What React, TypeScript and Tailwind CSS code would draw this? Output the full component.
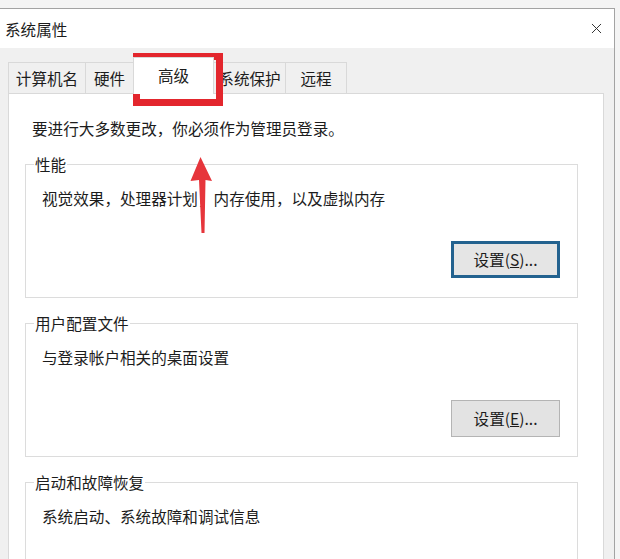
import { X } from "lucide-react";

const tabs = [
  { label: "计算机名", w: "w-[78px]" },
  { label: "硬件", w: "w-[49px]" },
  { label: "高级", w: "w-[81px]", active: true },
  { label: "系统保护", w: "w-[73px]" },
  { label: "远程", w: "w-[62px]" },
];

function SettingsButton({ hotkey, focused }: { hotkey: string; focused?: boolean }) {
  return (
    <button
      className={
        focused
          ? "ml-auto mr-[9px] flex h-[37px] w-[109px] items-center justify-center border-[3px] border-[#23628f] bg-[#e5e5e5] text-[15.6px] text-[#1c1c1c]"
          : "ml-auto mr-[9px] flex h-[37px] w-[109px] items-center justify-center border border-[#b4b4b4] bg-[#e3e3e3] text-[15.6px] text-[#1c1c1c]"
      }
    >
      设置(<span className="underline">{hotkey}</span>)...
    </button>
  );
}

function Group({
  title,
  text,
  hotkey,
  focused,
  className,
}: {
  title: string;
  text: string;
  hotkey: string;
  focused?: boolean;
  className: string;
}) {
  return (
    <fieldset className={`h-[144px] border border-[#dcdcdc] px-[8px] ${className}`}>
      <legend className="px-[1px] leading-[20px]">{title}</legend>
      <p className="mt-[14px] pl-[8px] leading-[20px]">{text}</p>
      <div className="mt-[33px] flex">
        <SettingsButton hotkey={hotkey} focused={focused} />
      </div>
    </fieldset>
  );
}

export default function App() {
  return (
    <div className="relative h-[559px] w-[620px] overflow-hidden bg-[#f4f4f4] pt-[8px] font-['Noto_Sans_CJK_SC','Liberation_Sans',sans-serif] text-[15.6px] text-[#1c1c1c]">
      <div className="flex h-full w-[615px] flex-col border-t border-r border-[#a3a3a3] bg-[#f0f0f0]">
        <div className="flex h-[39px] shrink-0 items-center justify-between bg-white pl-[5px]">
          <span className="leading-[20px]">系统属性</span>
          <div className="flex h-full w-[36px] items-center justify-center text-[#333]">
            <X size={17} strokeWidth={1.4} />
          </div>
        </div>

        <div className="flex flex-1 flex-col pl-[8px] pr-[10px] pt-[9px]">
          <div className="flex h-[36px] items-end">
            {tabs.map((t) =>
              t.active ? (
                <div
                  key={t.label}
                  className={`relative z-10 -mb-px -ml-px flex h-[37px] items-center justify-center border border-b-0 border-[#d9d9d9] bg-white pb-[3px] leading-[20px] ${t.w}`}
                >
                  {t.label}
                </div>
              ) : (
                <div
                  key={t.label}
                  className={`-ml-px flex h-[31px] items-center justify-center border border-b-0 border-[#d9d9d9] bg-[#f0f0f0] leading-[20px] first:ml-0 ${t.w}`}
                >
                  {t.label}
                </div>
              )
            )}
          </div>

          <div className="flex-1 border border-[#d9d9d9] bg-white pl-[16px] pr-[25px] pt-[24px]">
            <p className="pl-[7px] leading-[20px]">要进行大多数更改，你必须作为管理员登录。</p>
            <Group
              className="mt-[16px]"
              title="性能"
              text="视觉效果，处理器计划，内存使用，以及虚拟内存"
              hotkey="S"
              focused
            />
            <Group className="mt-[15px]" title="用户配置文件" text="与登录帐户相关的桌面设置" hotkey="E" />
            <Group className="mt-[15px]" title="启动和故障恢复" text="系统启动、系统故障和调试信息" hotkey="T" />
          </div>
        </div>
      </div>

      <div className="absolute left-[133px] top-[53px] h-[53px] w-[90px] border-[7px] border-[#e3262d]" />

      <svg className="absolute left-[186px] top-[154px]" width="32" height="84" viewBox="0 0 32 84">
        <path d="M14.5 3 L26 27 L19.5 26 L18.5 79 L15.5 79 L13 26 L4.5 27 Z" fill="#e6353b" />
      </svg>
    </div>
  );
}
